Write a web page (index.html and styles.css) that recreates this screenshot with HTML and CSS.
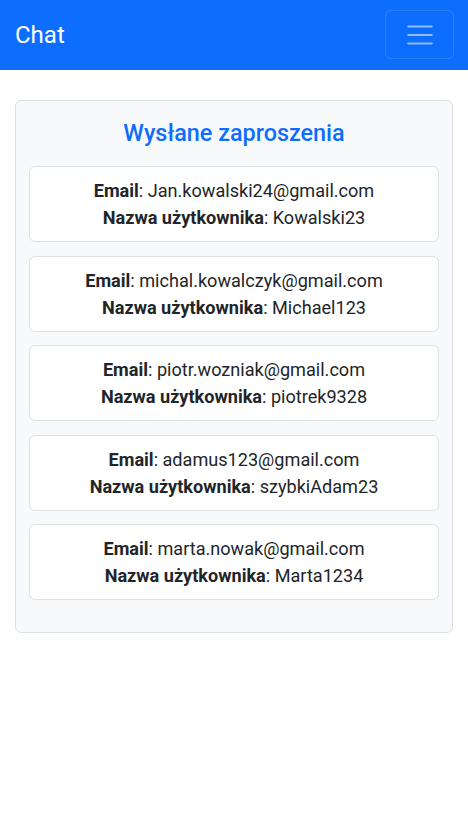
FILE: index.html
```html
<!DOCTYPE html>
<html lang="pl">
<head>
<meta charset="utf-8">
<title>Chat</title>
<link rel="stylesheet" href="styles.css">
</head>
<body>
<nav class="navbar">
  <span class="brand">Chat</span>
  <button class="toggler" type="button" aria-label="Menu">
    <svg width="32" height="32" viewBox="0 0 30 30"><path stroke="rgba(255,255,255,0.55)" stroke-linecap="round" stroke-width="2" d="M4 7h22M4 15h22M4 23h22"/></svg>
  </button>
</nav>
<main class="container">
  <section class="panel">
    <h2 class="title">Wysłane zaproszenia</h2>
    <ul class="list">
      <li class="item"><div><b>Email</b>: Jan.kowalski24@gmail.com</div><div><b>Nazwa użytkownika</b>: Kowalski23</div></li>
      <li class="item"><div><b>Email</b>: michal.kowalczyk@gmail.com</div><div><b>Nazwa użytkownika</b>: Michael123</div></li>
      <li class="item"><div><b>Email</b>: piotr.wozniak@gmail.com</div><div><b>Nazwa użytkownika</b>: piotrek9328</div></li>
      <li class="item"><div><b>Email</b>: adamus123@gmail.com</div><div><b>Nazwa użytkownika</b>: szybkiAdam23</div></li>
      <li class="item"><div><b>Email</b>: marta.nowak@gmail.com</div><div><b>Nazwa użytkownika</b>: Marta1234</div></li>
    </ul>
  </section>
</main>
</body>
</html>
```
FILE: styles.css
```css
* { box-sizing: border-box; }
body {
  margin: 0;
  font-family: Roboto, "Liberation Sans", sans-serif;
  color: #212529;
  background: #fff;
}
.navbar {
  height: 70px;
  background: #0d6efd;
  display: flex;
  align-items: center;
  justify-content: space-between;
  padding: 0 14px 0 15px;
}
.brand {
  color: #fff;
  font-size: 24px;
  line-height: 1;
  padding-bottom: 1px;
}
.toggler {
  width: 69px;
  height: 49px;
  margin-bottom: 1px;
  background: transparent;
  border: 1px solid rgba(255,255,255,0.12);
  border-radius: 6px;
  display: flex;
  align-items: center;
  justify-content: center;
  padding: 0;
}
.toggler svg { display: block; }
.container {
  padding: 30px 15px;
}
.panel {
  background: #f8f9fa;
  border: 1px solid #dee2e6;
  border-radius: 6px;
  padding: 17px 13px 32px;
}
.title {
  margin: 0 0 18px;
  text-align: center;
  color: #0d6efd;
  font-size: 23.4px;
  font-weight: 500;
  line-height: 30px;
}
.list {
  list-style: none;
  margin: 0;
  padding: 0;
  display: flex;
  flex-direction: column;
  gap: 13.5px;
}
.item {
  background: #fff;
  border: 1px solid #dee2e6;
  border-radius: 6px;
  padding: 10px;
  text-align: center;
  font-size: 18.1px;
  line-height: 27px;
}
.item b { font-weight: 700; }
```
